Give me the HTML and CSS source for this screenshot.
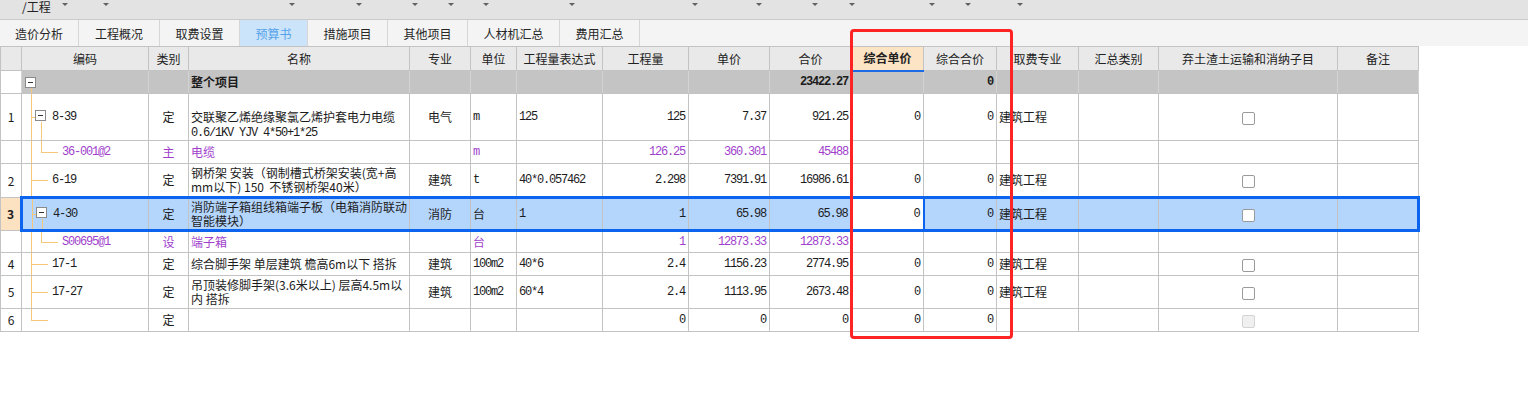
FILE: index.html
```html
<!DOCTYPE html>
<html lang="zh-CN">
<head>
<meta charset="utf-8">
<title>预算书</title>
<link rel="stylesheet" href="styles.css">
</head>
<body>
<div class="page">
  <div class="topbar">
    <div class="combo"><span class="title">/工程</span><i class="arrow"></i></div>
    <div class="combo"><i class="arrow"></i></div>
    <div class="combo"><i class="arrow"></i></div>
    <div class="combo"><i class="arrow"></i></div>
    <div class="combo"><i class="arrow"></i></div>
    <div class="combo"><i class="arrow"></i></div>
    <div class="combo"><i class="arrow"></i></div>
    <div class="combo"><i class="arrow"></i></div>
    <div class="combo"><i class="arrow"></i></div>
    <div class="combo"><i class="arrow"></i></div>
    <div class="combo"><i class="arrow"></i></div>
    <div class="combo"><i class="arrow"></i></div>
    <div class="combo"><i class="arrow"></i></div>
    <div class="combo"><i class="arrow"></i></div>
    <div class="combo"><i class="arrow"></i></div>
  </div>
  <div class="tabs">
    <div class="tab tw1">造价分析</div>
    <div class="tab tw2">工程概况</div>
    <div class="tab tw3">取费设置</div>
    <div class="tab tw4 on">预算书</div>
    <div class="tab tw5">措施项目</div>
    <div class="tab tw6">其他项目</div>
    <div class="tab tw7">人材机汇总</div>
    <div class="tab tw8">费用汇总</div>
  </div>
  <table class="grid">
    <colgroup>
      <col class="k0"><col class="k1"><col class="k2"><col class="k3"><col class="k4"><col class="k5"><col class="k6"><col class="k7"><col class="k8"><col class="k9"><col class="k10"><col class="k11"><col class="k12"><col class="k13"><col class="k14"><col class="k15">
    </colgroup>
    <thead>
      <tr class="hd">
        <th></th><th>编码</th><th>类别</th><th>名称</th><th>专业</th><th>单位</th><th>工程量表达式</th><th>工程量</th><th>单价</th><th>合价</th><th class="hl">综合单价</th><th>综合合价</th><th>取费专业</th><th>汇总类别</th><th>弃土渣土运输和消纳子目</th><th>备注</th>
      </tr>
    </thead>
    <tbody>
      <tr class="tot">
        <td class="num"></td><td class="t-root"><i class="tg"></i></td><td></td><td class="b">整个项目</td><td></td><td></td><td></td><td></td><td></td><td class="r n b">23422.27</td><td></td><td class="r n b">0</td><td></td><td></td><td></td><td></td>
      </tr>
      <tr class="h47">
        <td class="num">1</td><td class="t-open n"><i class="tg"></i>8-39</td><td class="c">定</td><td class="top">交联聚乙烯绝缘聚氯乙烯护套电力电缆<br><span class="n">0.6/1KV YJV 4*50+1*25</span></td><td class="c">电气</td><td class="n">m</td><td class="n">125</td><td class="r n">125</td><td class="r n">7.37</td><td class="r n">921.25</td><td class="r n">0</td><td class="r n">0</td><td>建筑工程</td><td></td><td class="c"><i class="cb"></i></td><td></td>
      </tr>
      <tr class="h23 p">
        <td class="num"></td><td class="t-sub n">36-001@2</td><td class="c">主</td><td>电缆</td><td></td><td class="n">m</td><td></td><td class="r n">126.25</td><td class="r n">360.301</td><td class="r n">45488</td><td></td><td></td><td></td><td></td><td></td><td></td>
      </tr>
      <tr class="h34">
        <td class="num">2</td><td class="t-leaf n">6-19</td><td class="c">定</td><td>钢桥架 安装（钢制槽式桥架安装(宽+高<br>mm以下) 150&nbsp; 不锈钢桥架40米）</td><td class="c">建筑</td><td class="n">t</td><td class="n">40*0.057462</td><td class="r n">2.298</td><td class="r n">7391.91</td><td class="r n">16986.61</td><td class="r n">0</td><td class="r n">0</td><td>建筑工程</td><td></td><td class="c"><i class="cb"></i></td><td></td>
      </tr>
      <tr class="h33 sel">
        <td class="num cur">3</td><td class="t-open n first"><i class="tg"></i>4-30</td><td class="c">定</td><td>消防端子箱组线箱端子板（电箱消防联动<br>智能模块）</td><td class="c">消防</td><td>台</td><td class="n">1</td><td class="r n">1</td><td class="r n">65.98</td><td class="r n">65.98</td><td class="r n act">0</td><td class="r n">0</td><td>建筑工程</td><td></td><td class="c"><i class="cb"></i></td><td class="last"></td>
      </tr>
      <tr class="h22 p">
        <td class="num"></td><td class="t-sub n">S00695@1</td><td class="c">设</td><td>端子箱</td><td></td><td>台</td><td></td><td class="r n">1</td><td class="r n">12873.33</td><td class="r n">12873.33</td><td></td><td></td><td></td><td></td><td></td><td></td>
      </tr>
      <tr class="h23">
        <td class="num">4</td><td class="t-leaf n">17-1</td><td class="c">定</td><td>综合脚手架 单层建筑 檐高6m以下 搭拆</td><td class="c">建筑</td><td class="n">100m2</td><td class="n">40*6</td><td class="r n">2.4</td><td class="r n">1156.23</td><td class="r n">2774.95</td><td class="r n">0</td><td class="r n">0</td><td>建筑工程</td><td></td><td class="c"><i class="cb"></i></td><td></td>
      </tr>
      <tr class="h33">
        <td class="num">5</td><td class="t-leaf n">17-27</td><td class="c">定</td><td>吊顶装修脚手架(3.6米以上) 层高4.5m以<br>内 搭拆</td><td class="c">建筑</td><td class="n">100m2</td><td class="n">60*4</td><td class="r n">2.4</td><td class="r n">1113.95</td><td class="r n">2673.48</td><td class="r n">0</td><td class="r n">0</td><td>建筑工程</td><td></td><td class="c"><i class="cb"></i></td><td></td>
      </tr>
      <tr class="h23">
        <td class="num">6</td><td class="t-last n"></td><td class="c">定</td><td></td><td></td><td></td><td></td><td class="r n">0</td><td class="r n">0</td><td class="r n">0</td><td class="r n">0</td><td class="r n">0</td><td></td><td></td><td class="c"><i class="cb dis"></i></td><td></td>
      </tr>
    </tbody>
  </table>
  <div class="mark"></div>
</div>
</body>
</html>
```

FILE: styles.css
```css
* { box-sizing: border-box; }
html, body { margin: 0; padding: 0; background: #fff; }
body {
  font-family: "Noto Sans CJK SC", "Noto Sans", sans-serif;
  font-size: 12px;
  color: #1c1c1c;
}
.page { position: relative; width: 1528px; height: 419px; overflow: hidden; }

/* top combo bar */
.topbar {
  height: 20px;
  background: #e3e3e3;
  border-bottom: 1px solid #cbcbcb;
  display: grid;
  grid-template-columns: 68px 41px 186px 67px 56px 36px 35px 86px 123px 64px 56px 37px 80px 36px 52px;
}
.combo { display: flex; justify-content: flex-end; align-items: flex-start; }
.combo .title {
  margin-right: auto;
  padding-left: 22px;
  line-height: 14px;
  font-size: 12px;
  color: #222;
}
.arrow {
  display: block;
  width: 0; height: 0;
  margin-top: 3px;
  border-left: 3px solid transparent;
  border-right: 3px solid transparent;
  border-top: 3px solid #606060;
}

/* tabs */
.tabs { display: flex; height: 26px; background: #f4f4f4; }
.tab {
  display: flex; align-items: center; justify-content: center;
  border-right: 1px solid #d6d6d6;
  color: #262626;
}
.tab.on { background: #cce4f9; color: #55a3ec; }
.tw1 { width: 79px; } .tw2 { width: 81px; } .tw3 { width: 80px; } .tw4 { width: 68px; }
.tw5 { width: 80px; } .tw6 { width: 80px; } .tw7 { width: 92px; } .tw8 { width: 80px; }

/* grid */
table.grid { border-collapse: collapse; table-layout: fixed; width: 1418px; }
.k0 { width: 21px; } .k1 { width: 127px; } .k2 { width: 40px; } .k3 { width: 221px; }
.k4 { width: 61px; } .k5 { width: 46px; } .k6 { width: 86px; } .k7 { width: 86px; }
.k8 { width: 81px; } .k9 { width: 82px; } .k10 { width: 72px; } .k11 { width: 73px; }
.k12 { width: 82px; } .k13 { width: 80px; } .k14 { width: 179px; } .k15 { width: 81px; }

.grid th, .grid td {
  border: 1px solid #c3c3c3;
  padding: 0 2px;
  white-space: nowrap;
  overflow: hidden;
  font-weight: normal;
  line-height: 14px;
  vertical-align: middle;
  text-align: left;
}
.grid th { background: #e9e9e9; text-align: center; color: #222; }
.grid th.hl { background: #fde4c5; font-weight: bold; border-bottom: 2px solid #1b6ae6; }
.hd { height: 24px; }
.tot { height: 23px; }
.h47 { height: 47px; }
.h34 { height: 34px; }
.h33 { height: 33px; }
.h23 { height: 23px; }
.h22 { height: 22px; }

.tot td { background: #c4c4c4; border-left-color: #d3d3d3; border-right-color: #d3d3d3; }
.tot td.num { background: #fff; border-left-color: #c3c3c3; }
.grid td.num { text-align: center; padding: 0; }
.c { text-align: center !important; }
.grid td.r { text-align: right; padding-right: 3px; }
.b { font-weight: bold !important; }
.n { font-family: "Liberation Mono", "Noto Sans CJK SC", monospace; letter-spacing: -1.2px; }
.grid td.top { vertical-align: top; padding-top: 16px; }
.p td { color: #a13fcc; }

/* tree */
.tg {
  display: inline-block;
  width: 11px; height: 11px;
  border: 1px solid #8a8a8a;
  background: linear-gradient(#333, #333) center / 5px 1px no-repeat, #fff;
  vertical-align: middle;
  margin-right: 6px;
  margin-top: -2px;
}
.grid td.t-root {
  padding-left: 3px;
  background: linear-gradient(#f6c67b, #f6c67b) 9px 100% / 1px 6px no-repeat, #c4c4c4;
}
.grid td.t-open {
  padding-left: 13px;
  background-image:
    linear-gradient(#f6c67b, #f6c67b),
    linear-gradient(#f6c67b, #f6c67b),
    linear-gradient(#f6c67b, #f6c67b);
  background-position: 9px 0, 9px 50%, 19px 100%;
  background-size: 1px 100%, 4px 1px, 1px calc(50% - 5px);
  background-repeat: no-repeat;
}
.grid td.t-leaf {
  padding-left: 30px;
  background-image: linear-gradient(#f6c67b, #f6c67b), linear-gradient(#f6c67b, #f6c67b);
  background-position: 9px 0, 9px 50%;
  background-size: 1px 100%, 17px 1px;
  background-repeat: no-repeat;
}
.grid td.t-last {
  padding-left: 30px;
  background-image: linear-gradient(#f6c67b, #f6c67b), linear-gradient(#f6c67b, #f6c67b);
  background-position: 9px 0, 9px 50%;
  background-size: 1px 50%, 17px 1px;
  background-repeat: no-repeat;
}
.grid td.t-sub {
  padding-left: 40px;
  background-image:
    linear-gradient(#f6c67b, #f6c67b),
    linear-gradient(#f6c67b, #f6c67b),
    linear-gradient(#f6c67b, #f6c67b);
  background-position: 9px 0, 19px 0, 19px 50%;
  background-size: 1px 100%, 1px 50%, 17px 1px;
  background-repeat: no-repeat;
}

/* selection */
.sel td {
  background-color: #b4d5fc;
  border-top: 3px solid #0c64ee;
  border-bottom: 3px solid #0c64ee;
}
.sel td.num {
  background-color: #fde2c2;
  font-weight: bold;
  border-top: 1px solid #c3c3c3;
  border-bottom: 1px solid #c3c3c3;
}
.sel td.first { border-left: 3px solid #0c64ee; }
.sel td.last { border-right: 3px solid #0c64ee; }
.sel td.act { background-color: #fff; border-left: 2px solid #0c64ee; border-right: 2px solid #0c64ee; }

/* checkbox */
.cb {
  display: inline-block;
  width: 13px; height: 13px;
  border: 1px solid #9a9a9a;
  border-radius: 2px;
  background: #fff;
  vertical-align: middle;
}
.cb.dis { background: #f0f0f0; border-color: #d4d4d4; }

/* annotation */
.mark {
  position: absolute;
  left: 850px; top: 29px;
  width: 163px; height: 310px;
  border: 3px solid #ff2424;
  border-radius: 4px;
  pointer-events: none;
}
```
